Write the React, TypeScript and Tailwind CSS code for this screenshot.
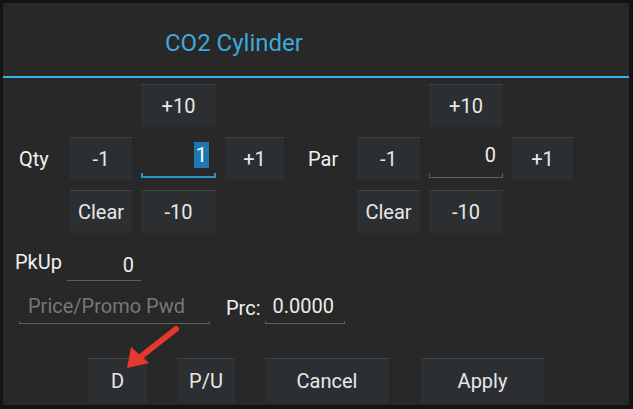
import React from "react";

const font = { fontFamily: "Roboto, 'Noto Sans', sans-serif" };

const Btn = ({ label, className = "" }: { label: string; className?: string }) => (
  <div
    className={`flex items-center justify-center bg-[#2c2f32] border-t border-[#3e4246] text-[20px] text-[#e8e8e8] ${className}`}
  >
    {label}
  </div>
);

const Field = ({
  children,
  focused = false,
  className = "",
  pad = "pr-[8px]",
}: {
  children: React.ReactNode;
  focused?: boolean;
  className?: string;
  pad?: string;
}) => (
  <div className={`flex flex-col ${className}`}>
    <div className={`flex flex-1 items-center justify-end text-[20px] text-[#ececec] ${pad}`}>
      {children}
    </div>
    <div
      className={
        focused
          ? "h-[5px] mb-[2px] border-x-2 border-b-2 border-[#2a93c9]"
          : "h-[5px] mb-[2px] border-x border-b border-[#5e5e5e]"
      }
    />
  </div>
);

export default function App() {
  return (
    <div
      className="w-[633px] h-[409px] bg-[#131313] pt-[3px] pl-[3px] pr-[4px] pb-[4px]"
      style={font}
    >
      <div className="relative flex h-full flex-col bg-[#282828]">
        <div className="flex h-[73px] items-center pl-[162px] pt-[6px] text-[24px] text-[#3fa9dc]">
          CO2 Cylinder
        </div>
        <div className="h-[2px] bg-[#33b5e5]" />

        <div className="mt-[6px] grid grid-cols-[46px_62px_75px_59px_55px_63px_74px_61px] grid-rows-[43px_43px_43px] gap-x-[9px] gap-y-[10px] pl-[12px]">
          <div />
          <div />
          <Btn label="+10" />
          <div />
          <div />
          <div />
          <Btn label="+10" />
          <div />

          <div className="flex items-center pl-[4px] text-[20px] text-[#f0f0f0]">Qty</div>
          <Btn label="-1" />
          <Field focused pad="pr-[7px]">
            <span className="bg-[#1c77b3] px-[2px] leading-[26px] text-white">1</span>
          </Field>
          <Btn label="+1" />
          <div className="flex items-center pl-[15px] text-[20px] text-[#f0f0f0]">Par</div>
          <Btn label="-1" />
          <Field pad="pr-[7px]">0</Field>
          <Btn label="+1" />

          <div />
          <Btn label="Clear" />
          <Btn label="-10" />
          <div />
          <div />
          <Btn label="Clear" />
          <Btn label="-10" />
          <div />
        </div>

        <div className="mt-[11px] flex h-[36px] pl-[12px]">
          <div className="flex w-[52px] items-center text-[20px] text-[#f0f0f0]">PkUp</div>
          <Field className="w-[74px]" pad="pr-[7px] pt-[6px]">0</Field>
        </div>

        <div className="mt-[8px] flex h-[38px] pl-[16px]">
          <div className="flex w-[191px] flex-col">
            <div className="flex flex-1 items-center pl-[9px] pt-[3px] text-[20px] text-[#777777]">
              Price/Promo Pwd
            </div>
            <div className="mb-[2px] h-[5px] border-x border-b border-[#5e5e5e]" />
          </div>
          <div className="ml-[16px] flex w-[39px] items-center pt-[2px] text-[20px] text-[#f0f0f0]">
            Prc:
          </div>
          <Field className="w-[80px]" pad="pr-[11px] pt-[3px]">0.0000</Field>
        </div>

        <div className="mt-auto flex h-[45px] gap-[30px] pl-[85px] mb-[2px]">
          <Btn label="D" className="w-[59px]" />
          <Btn label="P/U" className="w-[58px]" />
          <Btn label="Cancel" className="w-[124px]" />
          <Btn label="Apply" className="ml-[2px] w-[123px]" />
        </div>

        <svg
          className="pointer-events-none absolute left-0 top-0"
          width="626"
          height="402"
          viewBox="0 0 626 402"
        >
          <line x1="173" y1="326" x2="136" y2="355" stroke="#e5382e" strokeWidth="6" strokeLinecap="round" />
          <polygon points="124,365 128,344 146,360" fill="#e5382e" />
        </svg>
      </div>
    </div>
  );
}
